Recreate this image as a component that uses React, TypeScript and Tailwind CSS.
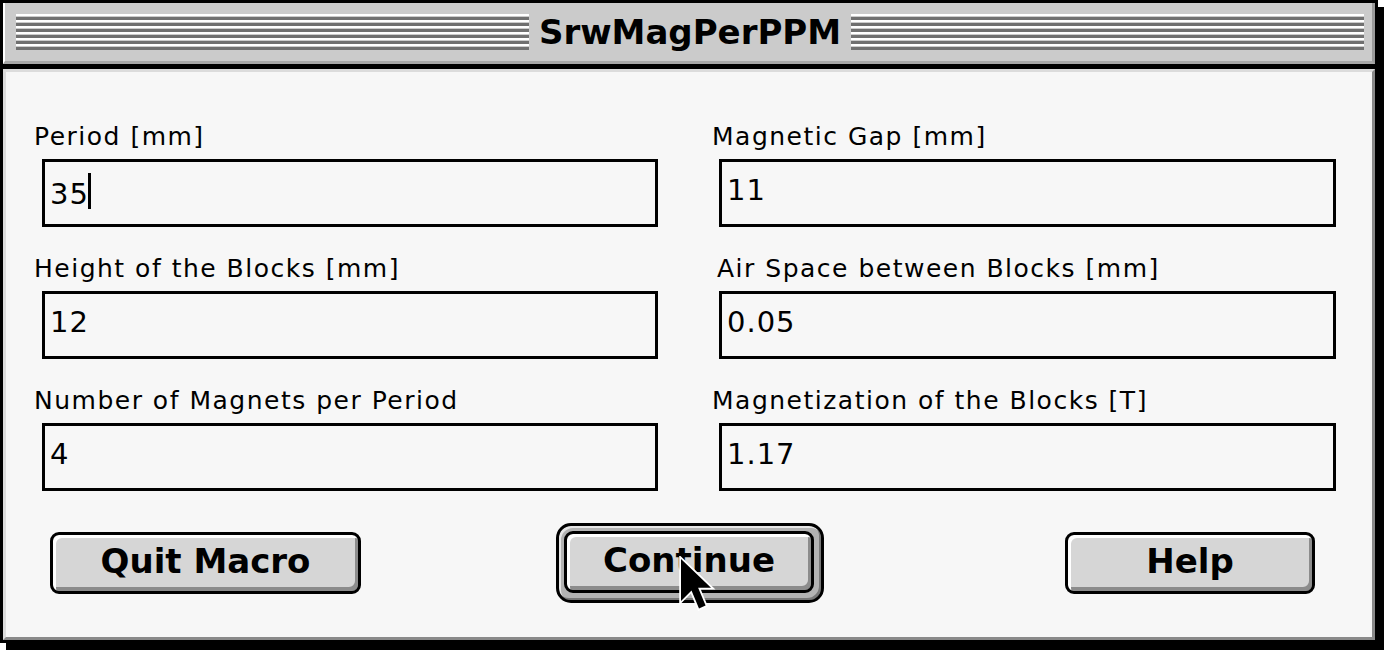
import React from "react";

type Field = { label: string; value: string; labelShift: string; caret?: boolean };

const fields: Field[] = [
  { label: "Period [mm]", value: "35", labelShift: "-ml-[8px]", caret: true },
  { label: "Magnetic Gap [mm]", value: "11", labelShift: "-ml-[7px]" },
  { label: "Height of the Blocks [mm]", value: "12", labelShift: "-ml-[8px]" },
  { label: "Air Space between Blocks [mm]", value: "0.05", labelShift: "-ml-[2px]" },
  { label: "Number of Magnets per Period", value: "4", labelShift: "-ml-[8px]" },
  { label: "Magnetization of the Blocks [T]", value: "1.17", labelShift: "-ml-[7px]" },
];

const font = "font-['DejaVu_Sans',_'Liberation_Sans',_sans-serif]";

const Stripes: React.FC = () => (
  <div className="flex-1 flex flex-col">
    {[0, 1, 2, 3, 4, 5].map((i) => (
      <div key={i} className="flex flex-col">
        <div className="h-[2px] bg-white" />
        <div className="h-[1px]" />
        <div className="h-[3px] bg-[#707070]" />
      </div>
    ))}
  </div>
);

const MacButton: React.FC<{ label: string; width: string }> = ({ label, width }) => (
  <div
    className={`${width} h-[62px] border-[3px] border-black rounded-[9px] bg-[#d6d6d6] shadow-[inset_3px_3px_0_#ffffff,inset_-3px_-4px_0_#8c8c8c] flex items-center justify-center pb-[4px] text-[34px] leading-[40px] font-bold text-black ${font}`}
  >
    {label}
  </div>
);

const Cursor: React.FC = () => (
  <svg
    className="absolute left-[119px] top-[30px]"
    width="39"
    height="57"
    viewBox="-1 -1 13 19"
  >
    <polygon
      points="0,0 0,14 3.5,10.5 6,16.5 8.2,15.5 5.7,9.6 10,9.6"
      fill="#000"
      stroke="#fff"
      strokeWidth="1.2"
      strokeLinejoin="miter"
      paintOrder="stroke"
    />
  </svg>
);

export default function App() {
  return (
    <div className={`w-[1384px] h-[650px] bg-white ${font}`}>
      <div className="w-[1378px] h-[643px] border-[3px] border-black shadow-[6px_7px_0_0_#000] flex flex-col">
        {/* title bar */}
        <div className="h-[61px] bg-[#cbcbcb] border-l-[2px] border-l-white border-r-[3px] border-r-[#9b9b9b] border-b-[3px] border-b-[#a8a8a8] pt-[9px] pl-[11px] pr-[8px]">
          <div className="flex items-center h-[40px]">
            <Stripes />
            <div className="px-[10px] bg-[#cbcbcb] text-[34px] leading-[40px] font-bold text-black">
              SrwMagPerPPM
            </div>
            <Stripes />
          </div>
        </div>
        <div className="h-[5px] bg-black" />

        {/* content */}
        <div className="flex-1 bg-[#f7f7f7] border-t-[3px] border-l-[3px] border-t-[#dcdcdc] border-l-[#dcdcdc] border-r-[3px] border-b-[3px] border-r-[#8a8a8a] border-b-[#8a8a8a]">
          <div className="pt-[50px] pl-[36px] grid grid-cols-[616px_617px] gap-x-[61px] gap-y-[27px]">
            {fields.map((f) => (
              <div key={f.label} className="flex flex-col">
                <div
                  className={`${f.labelShift} h-[30px] text-[25px] leading-[30px] tracking-[1.5px] text-black whitespace-nowrap`}
                >
                  {f.label}
                </div>
                <div className="mt-[7px] h-[68px] border-[3px] border-black bg-[#f7f7f7] pt-[11px] pl-[5px] text-[29px] leading-[34px] tracking-[1px] text-black whitespace-nowrap">
                  {f.value}
                  {f.caret && (
                    <span className="inline-block -ml-[1px] w-[3px] h-[36px] bg-black align-[-5px]" />
                  )}
                </div>
              </div>
            ))}
          </div>

          <div className="mt-[32px] flex items-center">
            <div className="ml-[44px]">
              <MacButton label="Quit Macro" width="w-[311px]" />
            </div>
            <div className="ml-[195px] relative w-[268px] h-[80px] border-[3px] border-black rounded-[15px] bg-[#b3b3b3] shadow-[inset_2px_2px_0_#e6e6e6,inset_-2px_-2px_0_#777777] p-[5px] pt-[5px]">
              <MacButton label="Continue" width="w-[250px]" />
              <Cursor />
            </div>
            <div className="ml-[241px]">
              <MacButton label="Help" width="w-[250px]" />
            </div>
          </div>
        </div>
      </div>
    </div>
  );
}
